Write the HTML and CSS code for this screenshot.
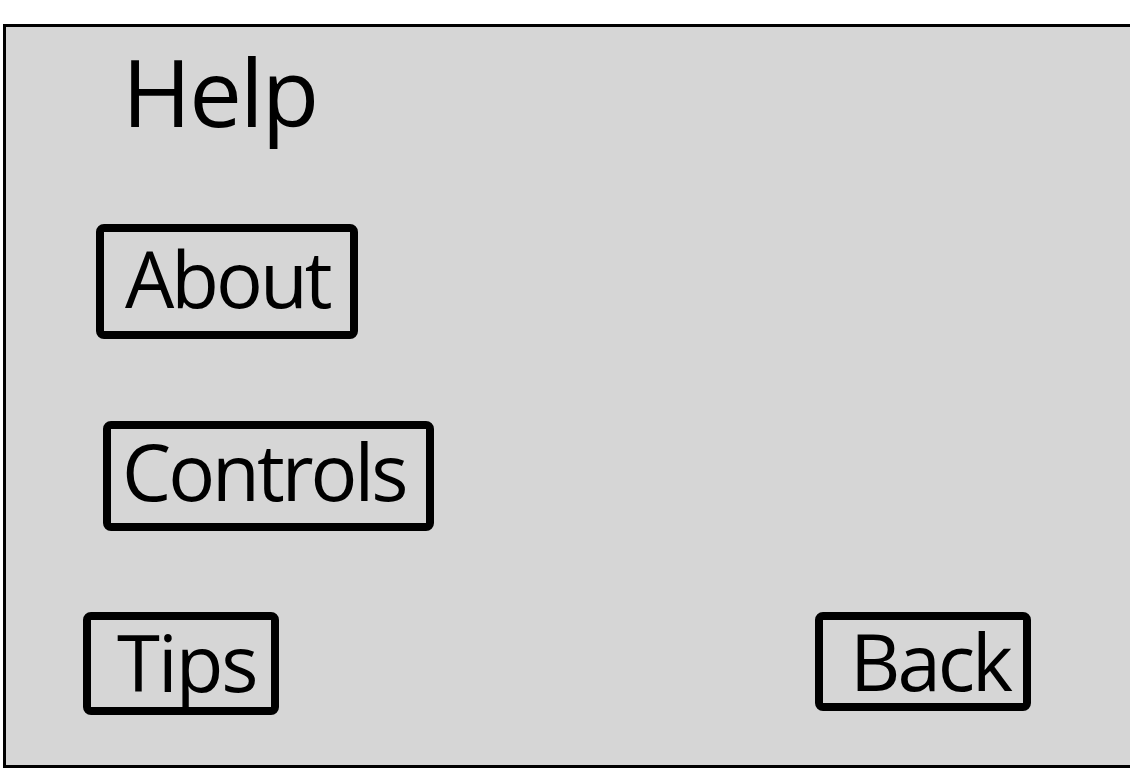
FILE: index.html
```html
<!DOCTYPE html>
<html>
<head>
<meta charset="utf-8">
<link rel="stylesheet" href="styles.css">
</head>
<body>
<div class="frame">
  <h1 class="title">Help</h1>
  <div class="btn btn-about">About</div>
  <div class="btn btn-controls">Controls</div>
  <div class="bottom-row">
    <div class="btn btn-tips">Tips</div>
    <div class="btn btn-back">Back</div>
  </div>
</div>
</body>
</html>
```
FILE: styles.css
```css
html, body {
  margin: 0;
  padding: 0;
  background: #ffffff;
}
body {
  font-family: "Open Sans", "Noto Sans", sans-serif;
  color: #000;
  overflow: hidden;
}
.frame {
  box-sizing: border-box;
  margin: 24px 0 0 3px;
  width: 1140px;
  height: 744px;
  background: #d6d6d6;
  border: 3px solid #000;
  border-right: none;
  display: flex;
  flex-direction: column;
  align-items: flex-start;
}
.title {
  margin: 17px 0 0 116px;
  font-size: 94px;
  line-height: 94px;
  font-weight: 400;
  letter-spacing: -2px;
}
.btn {
  box-sizing: border-box;
  border: 8px solid #000;
  border-radius: 8px;
  font-size: 78px;
  line-height: 78px;
  letter-spacing: -3px;
  white-space: nowrap;
}
.btn-about {
  width: 262px;
  height: 115px;
  margin: 86px 0 0 90px;
  padding: 7px 0 0 21px;
}
.btn-controls {
  width: 331px;
  height: 110px;
  margin: 82px 0 0 97px;
  padding: 3px 0 0 11px;
}
.bottom-row {
  display: flex;
  align-items: flex-start;
  box-sizing: border-box;
  width: 1025px;
  margin-top: 81px;
  padding-left: 77px;
}
.btn-tips {
  width: 196px;
  height: 103px;
  padding: 3px 0 0 26px;
  letter-spacing: -2px;
}
.btn-back {
  width: 216px;
  height: 99px;
  margin-left: auto;
  padding: 2px 0 0 27px;
}
```
